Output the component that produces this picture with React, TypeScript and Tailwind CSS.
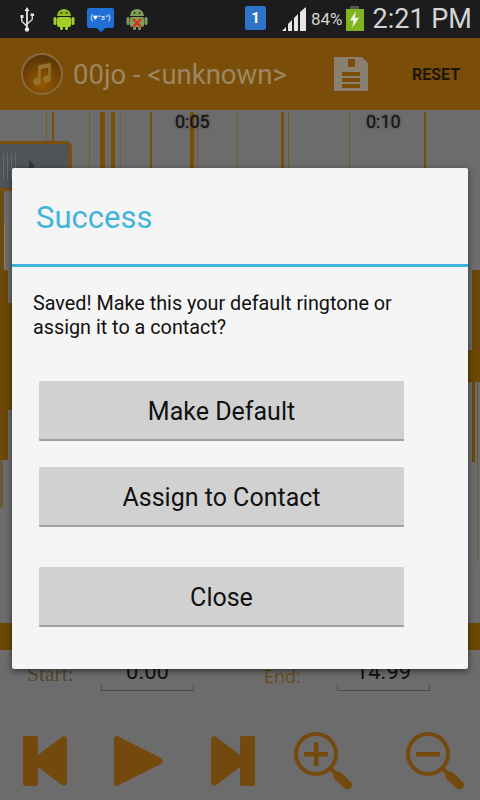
import React from "react";

const barsTop: [number, number, number][] = [
	[46, 1, 0.6], [52, 2, 1], [89, 1, 0.6], [100, 5, 1], [111, 4, 1], [120, 1, 0.5], [150, 2, 1], [190, 4, 1], [197, 1, 0.6],
	[237, 1, 0.5], [281, 3, 1], [288, 1, 0.6], [349, 1, 0.7], [424, 2, 1],
];

const Android = ({ body, head }: { body: string; head: string }) => (
	<svg viewBox="0 0 24 24" className="w-[24px] h-[24px]">
		<path d="M5 9a7 7 0 0 1 14 0z" fill={head} />
		<rect x="5" y="10" width="14" height="10" rx="2" fill={body} />
		<rect x="1.5" y="10" width="3" height="8" rx="1.5" fill={body} />
		<rect x="19.5" y="10" width="3" height="8" rx="1.5" fill={body} />
		<rect x="8" y="19" width="3" height="4" rx="1.5" fill={body} />
		<rect x="13" y="19" width="3" height="4" rx="1.5" fill={body} />
		<circle cx="9.5" cy="6" r="1" fill="#2b3a10" />
		<circle cx="14.5" cy="6" r="1" fill="#2b3a10" />
	</svg>
);

const StatusBar = () => (
	<div className="h-[38px] bg-[#1c1c1e] flex items-center shrink-0">
		<svg viewBox="0 0 18 26" className="w-[18px] h-[26px] ml-[18px]">
			<path d="M9 1 6.5 5h1.6v13.5L4.500 15v-3h1V9h-3v3h.6v3.600l5 5v2.200h1.800v-4.600l5-4.400V10h1.200V7.500h-3.500V10h1v3.300l-3.700 3.200V5h1.600z" fill="#e4e4e4" />
			<circle cx="9" cy="23.500" r="2.200" fill="#e4e4e4" />
		</svg>
		<div className="ml-[16px] -mt-[1px]">
			<Android body="#a3cf28" head="#8fbc22" />
		</div>
		<div className="relative ml-[11px] -mt-[3px] w-[27px] h-[20px] bg-[#1f6fd6] rounded-[2px] flex items-center justify-center">
			<span className="text-white text-[8px] leading-none font-['Roboto',sans-serif] whitespace-nowrap">(♥°з°)</span>
			<div className="absolute -bottom-[3px] left-[11px] w-[6px] h-[6px] bg-[#1f6fd6] rotate-45" />
		</div>
		<div className="relative ml-[11px] w-[24px] h-[24px]">
			<Android body="#7f9f58" head="#7f9f58" />
			<svg viewBox="0 0 12 12" className="absolute left-[6px] top-[10px] w-[12px] h-[12px]">
				<path d="M2 2 10 10M10 2 2 10" stroke="#d6301c" strokeWidth="2.400" />
			</svg>
		</div>
		<div className="ml-[96px] -mt-[2px] w-[21px] h-[24px] bg-[#2f73c9] rounded-[2px] flex items-center justify-center">
			<span className="text-white text-[15px] font-bold leading-none font-['Roboto',sans-serif]">1</span>
		</div>
		<svg viewBox="0 0 24 24" className="w-[24px] h-[24px] ml-[16px]">
			<path d="M0 24 4 20V24zM6 24V17L10 13V24zM12 24V11L16 7V24zM18 24V5L24 0V24z" fill="#e6e6e6" />
		</svg>
		<span className="ml-[5px] text-[17px] text-[#d4d4d4] font-['Roboto',sans-serif] leading-none">84%</span>
		<div className="ml-[3px] flex flex-col items-center -mt-[2px]">
			<div className="w-[9px] h-[3px] bg-[#555]" />
			<div className="w-[18px] h-[22px] bg-[#7fb41e] flex items-center justify-center">
				<svg viewBox="0 0 12 18" className="w-[11px] h-[17px]">
					<path d="M7.500 0 1 10h4l-1.500 8L11 7H6.500z" fill="#f1f7e2" />
				</svg>
			</div>
		</div>
		<span className="ml-[9px] text-[27px] text-[#d4d4d4] font-['Roboto',sans-serif] leading-none whitespace-nowrap">2:21 PM</span>
	</div>
);

const Header = () => (
	<div className="h-[72px] bg-[#7a4e08] flex items-center shrink-0">
		<div className="ml-[21px] w-[42px] h-[42px] rounded-full border-[2px] border-[#8a6a3e] bg-[radial-gradient(circle_at_50%_75%,#9a5a00,#4a2c08)] flex items-center justify-center">
			<svg viewBox="0 0 24 24" className="w-[30px] h-[30px]">
				<path d="M9 5 19 3v13a3 3 0 1 1-2-2.800V7L11 8.200V18a3 3 0 1 1-2-2.800z" fill="#93712f" />
			</svg>
		</div>
		<span className="ml-[10px] mt-[2px] w-[261px] text-[27.5px] text-[#9c8763] font-['Roboto',sans-serif] leading-none whitespace-nowrap">00jo - &lt;unknown&gt;</span>
		<svg viewBox="0 0 34 34" className="w-[34px] h-[34px]">
			<path fillRule="evenodd" d="M0 0H28L34 6V34H0zM14 2H21V10H14zM8 15H26V31H8z" fill="#8a8070" />
			<rect x="8" y="19" width="18" height="2" fill="#8a8070" />
			<rect x="8" y="25" width="18" height="2" fill="#8a8070" />
		</svg>
		<span className="ml-[44px] mt-[2px] text-[16px] font-bold text-[#1f1408] font-['Roboto',sans-serif] leading-none">RESET</span>
	</div>
);

const Waveform = () => (
	<div className="relative h-[513px] bg-[#6c6c6c] shrink-0">
		<svg className="absolute inset-0 w-full h-full" viewBox="0 0 480 513">
			{barsTop.map(([x, w, o]) => (
				<rect key={x} x={x} y="2" width={w} height="100" fill="#7a4e08" opacity={o} />
			))}
			<rect x="0" y="80" width="4" height="80" fill="#6b4a14" />
			<rect x="4" y="113" width="1" height="47" fill="#8b8264" />
			<rect x="0" y="160" width="8" height="33" fill="#6b4805" />
			<rect x="0" y="193" width="12" height="107" fill="#6b4805" />
			<rect x="0" y="300" width="8" height="50" fill="#6b4805" />
			<rect x="0" y="350" width="3" height="48" fill="#6b5a3a" />
			<rect x="472" y="160" width="8" height="80" fill="#6b4805" />
			<rect x="468" y="240" width="12" height="32" fill="#6b4805" />
			<rect x="472" y="272" width="3" height="80" fill="#6b4805" />
			<rect x="477" y="272" width="1" height="180" fill="#6b5a3a" />
		</svg>
		<span className="absolute left-[175px] -top-[2px] text-[18px] text-[#111] font-['Roboto',sans-serif] [text-shadow:0_0_3px_rgba(0,0,0,0.5)]">0:05</span>
		<span className="absolute left-[366px] -top-[2px] text-[18px] text-[#111] font-['Roboto',sans-serif] [text-shadow:0_0_3px_rgba(0,0,0,0.5)]">0:10</span>
		<div className="absolute left-0 top-[31px] w-[72px] h-[50px] bg-[#4f5257] border-[3px] border-l-0 border-[#7a4f0a] rounded-r-[6px] flex items-center gap-[3px] pl-[3px]">
			<div className="w-[1px] h-[26px] bg-[#666a70]" />
			<div className="w-[1px] h-[26px] bg-[#666a70]" />
			<div className="w-[1px] h-[26px] bg-[#666a70]" />
			<div className="w-[1px] h-[26px] bg-[#666a70]" />
			<svg viewBox="0 0 6 12" className="ml-[10px] w-[6px] h-[12px]">
				<path d="M0 0 6 6 0 12z" fill="#33363a" />
			</svg>
		</div>
	</div>
);

const Field = ({ value, width }: { value: string; width: string }) => (
	<div className={`${width} h-[41px] border-b border-[#4a4a4a] relative`}>
		<span className="absolute inset-x-0 top-[11px] text-center text-[22px] leading-none text-[#111] font-['Roboto',sans-serif]">{value}</span>
		<div className="absolute left-0 bottom-0 w-[1px] h-[5px] bg-[#4a4a4a]" />
		<div className="absolute right-0 bottom-0 w-[1px] h-[5px] bg-[#4a4a4a]" />
	</div>
);

const Magnifier = ({ plus }: { plus: boolean }) => (
	<svg viewBox="0 0 58 58" className="w-[58px] h-[58px]">
		<circle cx="22" cy="22" r="20" fill="none" stroke="#74490e" strokeWidth="4" />
		<path d="M37 37 42 42" stroke="#74490e" strokeWidth="4" />
		<path d="M44 44 53.500 53" stroke="#74490e" strokeWidth="9" strokeLinecap="round" />
		<rect x="10" y="20" width="24" height="4.500" fill="#74490e" />
		{plus && <rect x="20" y="10" width="4.500" height="24" fill="#74490e" />}
	</svg>
);

const Controls = () => (
	<div className="flex items-center pl-[23px] pt-[41px]">
		<svg viewBox="0 0 44 50" className="w-[44px] h-[50px]">
			<path d="M2 0H13a2 2 0 0 1 2 2V19L39 1a3 3 0 0 1 5 2V47a3 3 0 0 1-5 2L15 31V48a2 2 0 0 1-2 2H2a2 2 0 0 1-2-2V2a2 2 0 0 1 2-2z" fill="#74490e" />
		</svg>
		<svg viewBox="0 0 50 50" className="ml-[47px] w-[50px] h-[50px]">
			<path d="M0 4a3 3 0 0 1 5-3L47 22a3.500 3.500 0 0 1 0 6L5 49a3 3 0 0 1-5-3z" fill="#74490e" />
		</svg>
		<svg viewBox="0 0 44 50" className="ml-[47px] w-[44px] h-[50px]">
			<path d="M42 0H31a2 2 0 0 0-2 2V19L5 1a3 3 0 0 0-5 2V47a3 3 0 0 0 5 2L29 31V48a2 2 0 0 0 2 2H42a2 2 0 0 0 2-2V2a2 2 0 0 0-2-2z" fill="#74490e" />
		</svg>
		<div className="ml-[39px]">
			<Magnifier plus />
		</div>
		<div className="ml-[54px]">
			<Magnifier plus={false} />
		</div>
	</div>
);

const DialogButton = ({ label, className }: { label: string; className?: string }) => (
	<button className={`w-[365px] h-[60px] ml-[27px] pt-[3px] block bg-[#d1d1d1] border-b-2 border-[#a0a0a0] rounded-[1px] text-[25px] leading-none text-[#111] font-['Roboto',sans-serif] ${className ?? ""}`}>
		{label}
	</button>
);

export default function App() {
	return (
		<div className="relative w-[480px] h-[800px] overflow-hidden bg-[#6c6c6c] flex flex-col">
			<StatusBar />
			<Header />
			<Waveform />
			<div className="h-[27px] bg-[#6b4805] shrink-0" />
			{/* Start / End */}
			<div className="flex h-[41px] shrink-0">
				<span className="ml-[27px] mt-[14px] w-[74px] text-[21.5px] leading-none text-[#57472e] font-['Liberation_Serif',serif]">Start:</span>
				<Field value="0.00" width="w-[93px]" />
				<span className="ml-[70px] mt-[17px] w-[73px] text-[18px] leading-none text-[#6b4a1c] font-['Open_Sans',sans-serif]">End:</span>
				<Field value="14.99" width="w-[93px]" />
			</div>
			<Controls />

			{/* Dialog */}
			<div className="absolute left-[12px] top-[168px] w-[456px] h-[501px] bg-[#f5f5f5] rounded-[2px] shadow-[0_2px_6px_rgba(0,0,0,0.55)] font-['Roboto',sans-serif]">
				<div className="h-[96px] flex items-center pl-[24px] pt-[4px] text-[31px] text-[#3fb4dc]">Success</div>
				<div className="h-[3px] bg-[#3fb4dc]" />
				<p className="pt-[25px] pl-[21px] text-[19.8px] leading-[24px] text-[#111]">
					Saved! Make this your default ringtone or
					<br />
					assign it to a contact?
				</p>
				<DialogButton label="Make Default" className="mt-[41px]" />
				<DialogButton label="Assign to Contact" className="mt-[26px]" />
				<DialogButton label="Close" className="mt-[40px]" />
			</div>
		</div>
	);
}
